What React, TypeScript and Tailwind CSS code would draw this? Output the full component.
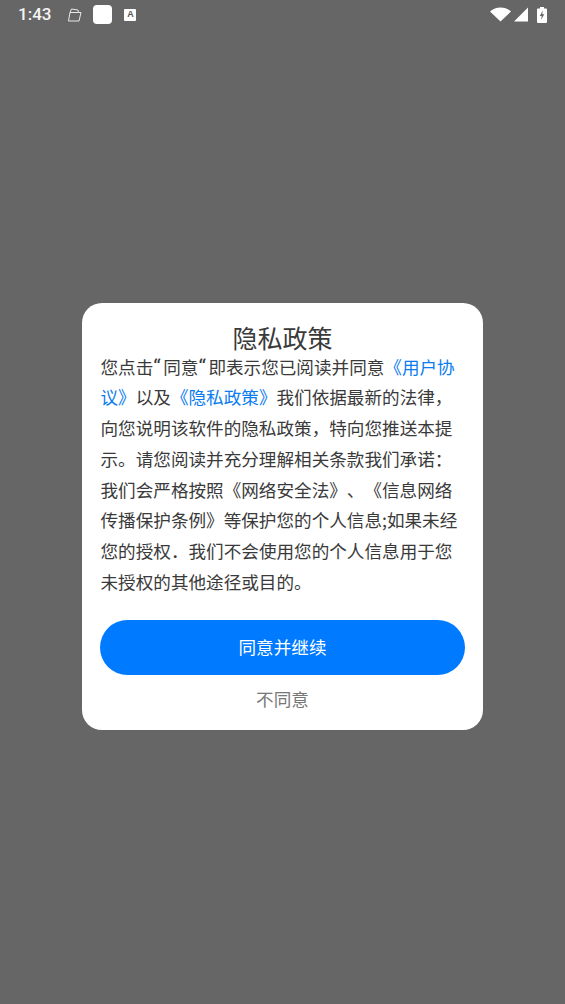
const cjk = "font-['Noto_Sans_CJK_SC',sans-serif]";

const link = "text-[#0a7cf0]";

// full-width punctuation, written as escapes so it can't turn into ascii
const comma = "\uFF0C";
const colon = "\uFF1A";
const dot = "\uFF0E";

// hand-broken lines, same wrap as the screenshot
function Quote() {
  return <span className="font-['Roboto',sans-serif] text-[21px] leading-[0] tracking-[2.5px]">“</span>;
}

function StatusBar() {
  return (
    <div className="flex h-[29px] shrink-0 items-center justify-between px-[18px] text-white">
      <div className="flex items-center">
        <span className="font-['Roboto',sans-serif] text-[17px] font-medium leading-none text-[#f4f4f4]">1:43</span>
        <svg className="ml-[15px]" width="17" height="16" viewBox="0 0 17 16" fill="none" stroke="#e8e8e8" strokeWidth="1">
          <path d="M4 5.500 5.500 2l6.500 1 .5 2.500h2.500l-2 8.500H2.500z" />
          <path d="M4 5.500h8.500" />
        </svg>
        <div className="ml-[10px] h-[19px] w-[19px] rounded-[4px] bg-white" />
        <div className="ml-[12px] flex h-[12px] w-[12px] items-center justify-center rounded-[1px] bg-white">
          <span className="font-['Liberation_Sans',sans-serif] text-[9px] font-bold leading-none text-[#555]">A</span>
        </div>
      </div>
      <div className="flex items-center">
        <svg width="21" height="15" viewBox="0 0 21 15" fill="#fff">
          <path d="M0 4.500C3 1.800 6.500.5 10.500.5S18 1.800 21 4.500L10.500 14.500z" />
        </svg>
        <svg className="ml-[3px]" width="14" height="15" viewBox="0 0 14 15" fill="#fff">
          <path d="M14 .5V14.500H0z" />
        </svg>
        <svg className="ml-[9px]" width="10" height="16" viewBox="0 0 10 16" fill="none">
          <path fillRule="evenodd" clipRule="evenodd" fill="#fff" d="M3 0h4v1.500h2a1 1 0 0 1 1 1V15a1 1 0 0 1-1 1H1a1 1 0 0 1-1-1V2.500a1 1 0 0 1 1-1h2zM5.800 3.500 2.800 9h1.900l-.5 3.800L7.300 7.200H5.300z" />
        </svg>
      </div>
    </div>
  );
}

export default function App() {
  return (
    <div className={`flex h-[1004px] w-[565px] flex-col overflow-hidden bg-[#666666] ${cjk}`}>
      <StatusBar />
      <div className="flex flex-1 items-center justify-center">
        <div className="w-[401px] rounded-[20px] bg-white px-[18px] pb-[16px] pt-[20px]">
          <h2 className="text-center text-[25px] font-normal leading-[29px] text-[#3a3a3a]">隐私政策</h2>
          <p className="whitespace-nowrap pl-[0.5px] text-[17.6px] leading-[30.7px] text-[#3a3a3a] [text-spacing-trim:space-all]">
            您点击<Quote />同意<Quote />即表示您已阅读并同意<span className={link}>《用户协</span>
            <br />
            <span className={link}>议》</span>以及<span className={link}>《隐私政策》</span>我们依据最新的法律{comma}
            <br />
            向您说明该软件的隐私政策{comma}特向您推送本提
            <br />
            示。请您阅读并充分理解相关条款我们承诺{colon}
            <br />
            我们会严格按照《网络安全法》、《信息网络
            <br />
            传播保护条例》等保护您的个人信息;如果未经
            <br />
            您的授权{dot}我们不会使用您的个人信息用于您
            <br />
            未授权的其他途径或目的。
          </p>
          <button className="mt-[23px] flex h-[55px] w-full items-center justify-center rounded-full bg-[#007aff] pb-[2px] text-[17.6px] text-white">
            同意并继续
          </button>
          <div className="mt-[9px] text-center text-[17.6px] leading-[30px] text-[#777777]">不同意</div>
        </div>
      </div>
    </div>
  );
}
